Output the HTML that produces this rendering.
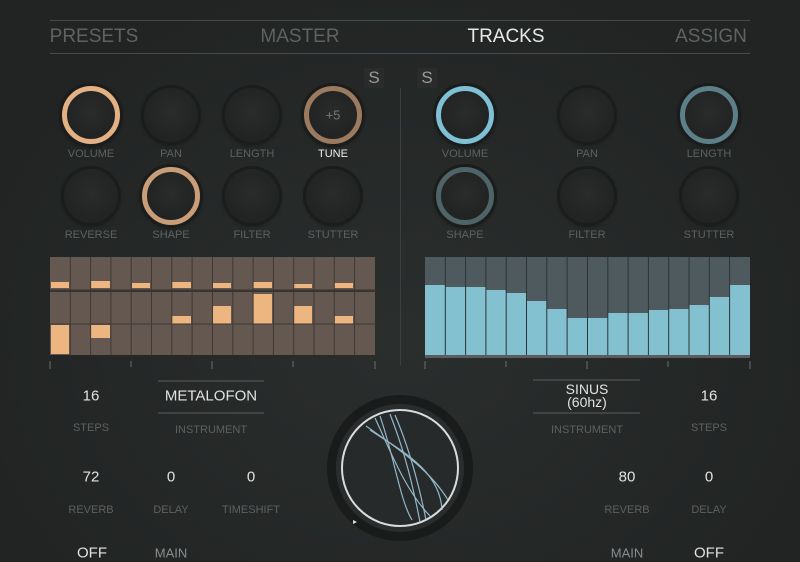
<!DOCTYPE html><html><head><style>
body{margin:0;width:800px;height:560px;overflow:hidden;background:radial-gradient(ellipse at 50% 60%,#2a2e2d,#212423 80%);font-family:"Liberation Sans",sans-serif;position:relative}
.a{position:absolute}
.t{position:absolute;transform:translate(-50%,-50%);white-space:nowrap}
.tab{font-size:19px;color:#5e6262;top:37px}
.lbl{font-size:11px;color:#5d6161}
.val{font-size:15px;color:#e2e2e2}
.k{position:absolute;width:54px;height:54px;border-radius:50%;transform:translate(-50%,-50%);background:radial-gradient(circle at 50% 45%,#2a2c2c,#1e2020);box-shadow:0 0 0 3px #1b1c1c,0 2px 5px #111}
.r{width:48px;height:48px;border-width:5px;border-style:solid}
.hl{position:absolute;height:1px;background:#474a4a}
</style></head><body>
<div class="hl" style="left:50px;width:700px;top:20px"></div>
<div class="hl" style="left:50px;width:700px;top:53px"></div>
<div class="t tab" style="left:94px">PRESETS</div>
<div class="t tab" style="left:300px">MASTER</div>
<div class="t tab" style="left:506px;color:#e8e8e8">TRACKS</div>
<div class="t tab" style="left:711px">ASSIGN</div>
<div class="a" style="left:364px;top:68px;width:20px;height:20px;background:#2a2c2c;color:#9a9c9c;font-size:17px;text-align:center;line-height:20px">S</div>
<div class="a" style="left:417px;top:68px;width:20px;height:20px;background:#2a2c2c;color:#9a9c9c;font-size:17px;text-align:center;line-height:20px">S</div>
<div class="a" style="left:400px;top:88px;width:1px;height:278px;background:#3c3f3f"></div>

<div class="k r" style="left:91px;top:115px;border-color:#e4b184"></div>
<div class="k" style="left:171px;top:115px"></div>
<div class="k" style="left:252px;top:115px"></div>
<div class="k r" style="left:333px;top:115px;border-color:#9c7a5e"></div>
<div class="t" style="left:333px;top:115px;color:#777;font-size:13px">+5</div>
<div class="k" style="left:91px;top:196px"></div>
<div class="k r" style="left:171px;top:196px;border-color:#c99d77"></div>
<div class="k" style="left:252px;top:196px"></div>
<div class="k" style="left:333px;top:196px"></div>
<div class="t lbl" style="left:91px;top:154px">VOLUME</div>
<div class="t lbl" style="left:171px;top:154px">PAN</div>
<div class="t lbl" style="left:252px;top:154px">LENGTH</div>
<div class="t lbl" style="left:333px;top:154px;color:#eee">TUNE</div>
<div class="t lbl" style="left:91px;top:235px">REVERSE</div>
<div class="t lbl" style="left:171px;top:235px">SHAPE</div>
<div class="t lbl" style="left:252px;top:235px">FILTER</div>
<div class="t lbl" style="left:333px;top:235px">STUTTER</div>

<div class="k r" style="left:465px;top:115px;border-color:#7fc0d4"></div>
<div class="k" style="left:587px;top:115px"></div>
<div class="k r" style="left:709px;top:115px;border-color:#5d7f88"></div>
<div class="k r" style="left:465px;top:196px;border-color:#4f6468"></div>
<div class="k" style="left:587px;top:196px"></div>
<div class="k" style="left:709px;top:196px"></div>
<div class="t lbl" style="left:465px;top:154px">VOLUME</div>
<div class="t lbl" style="left:587px;top:154px">PAN</div>
<div class="t lbl" style="left:709px;top:154px">LENGTH</div>
<div class="t lbl" style="left:465px;top:235px">SHAPE</div>
<div class="t lbl" style="left:587px;top:235px">FILTER</div>
<div class="t lbl" style="left:709px;top:235px">STUTTER</div>

<svg class="a" style="left:0;top:0" width="800" height="560">
<rect x="50" y="257" width="325" height="98" fill="#645850"/>
<g fill="#edb57f">
<rect x="51" y="282" width="18" height="6"/><rect x="91" y="281" width="19" height="7"/><rect x="132" y="283" width="18" height="5"/><rect x="172" y="282" width="19" height="6"/><rect x="213" y="283" width="18" height="5"/><rect x="253" y="282" width="19" height="6"/><rect x="294" y="284" width="18" height="4"/><rect x="334" y="283" width="19" height="5"/>
<rect x="172" y="316" width="19" height="8"/><rect x="213" y="306" width="18" height="18"/><rect x="253" y="294" width="19" height="30"/><rect x="294" y="306" width="18" height="18"/><rect x="334" y="316" width="19" height="8"/>
<rect x="51" y="325" width="18" height="29"/><rect x="91" y="325" width="19" height="13"/>
</g>
<g stroke="#3f3935" stroke-width="1">
<line x1="70.3" y1="257" x2="70.3" y2="355"/><line x1="90.6" y1="257" x2="90.6" y2="355"/><line x1="110.9" y1="257" x2="110.9" y2="355"/><line x1="131.2" y1="257" x2="131.2" y2="355"/><line x1="151.5" y1="257" x2="151.5" y2="355"/><line x1="171.8" y1="257" x2="171.8" y2="355"/><line x1="192.1" y1="257" x2="192.1" y2="355"/><line x1="212.5" y1="257" x2="212.5" y2="355"/><line x1="232.8" y1="257" x2="232.8" y2="355"/><line x1="253.1" y1="257" x2="253.1" y2="355"/><line x1="273.4" y1="257" x2="273.4" y2="355"/><line x1="293.7" y1="257" x2="293.7" y2="355"/><line x1="314" y1="257" x2="314" y2="355"/><line x1="334.3" y1="257" x2="334.3" y2="355"/><line x1="354.6" y1="257" x2="354.6" y2="355"/>
<line x1="50" y1="324" x2="375" y2="324"/>
</g>
<rect x="50" y="289.5" width="325" height="2.5" fill="#3a3533"/>
<rect x="425" y="257" width="325" height="100" fill="#4e5a5e"/>
<g fill="#84c1d0">
<rect x="425" y="285" width="20.3" height="70"/><rect x="445.3" y="287" width="20.3" height="68"/><rect x="465.6" y="287" width="20.3" height="68"/><rect x="485.9" y="290" width="20.3" height="65"/><rect x="506.2" y="293" width="20.3" height="62"/><rect x="526.5" y="301" width="20.3" height="54"/><rect x="546.8" y="309" width="20.3" height="46"/><rect x="567.1" y="318" width="20.3" height="37"/><rect x="587.5" y="318" width="20.3" height="37"/><rect x="607.8" y="313" width="20.3" height="42"/><rect x="628.1" y="313" width="20.3" height="42"/><rect x="648.4" y="310" width="20.3" height="45"/><rect x="668.7" y="309" width="20.3" height="46"/><rect x="689" y="305" width="20.3" height="50"/><rect x="709.3" y="297" width="20.3" height="58"/><rect x="729.6" y="285" width="20.4" height="70"/>
</g>
<g stroke="#2b3538" stroke-width="1">
<line x1="445.3" y1="257" x2="445.3" y2="355"/><line x1="465.6" y1="257" x2="465.6" y2="355"/><line x1="485.9" y1="257" x2="485.9" y2="355"/><line x1="506.2" y1="257" x2="506.2" y2="355"/><line x1="526.5" y1="257" x2="526.5" y2="355"/><line x1="546.8" y1="257" x2="546.8" y2="355"/><line x1="567.1" y1="257" x2="567.1" y2="355"/><line x1="587.5" y1="257" x2="587.5" y2="355"/><line x1="607.8" y1="257" x2="607.8" y2="355"/><line x1="628.1" y1="257" x2="628.1" y2="355"/><line x1="648.4" y1="257" x2="648.4" y2="355"/><line x1="668.7" y1="257" x2="668.7" y2="355"/><line x1="689" y1="257" x2="689" y2="355"/><line x1="709.3" y1="257" x2="709.3" y2="355"/><line x1="729.6" y1="257" x2="729.6" y2="355"/>
</g>
<rect x="425" y="355" width="325" height="3" fill="#5b5c60"/>
<g stroke="#6a6d6d" stroke-width="1">
<line x1="50" y1="361" x2="50" y2="369"/><line x1="375" y1="361" x2="375" y2="369"/><line x1="212" y1="361" x2="212" y2="369"/><line x1="131" y1="361" x2="131" y2="367"/><line x1="293" y1="361" x2="293" y2="367"/>
<line x1="425" y1="361" x2="425" y2="369"/><line x1="750" y1="361" x2="750" y2="369"/><line x1="587" y1="361" x2="587" y2="369"/><line x1="506" y1="361" x2="506" y2="367"/><line x1="668" y1="361" x2="668" y2="367"/>
</g>
<circle cx="400" cy="468" r="73" fill="#1a1c1c"/>
<circle cx="400" cy="468" r="64" fill="#2a2d2d"/>
<circle cx="400" cy="468" r="58" fill="#272a2b" stroke="#d9dcdc" stroke-width="2"/>
<g fill="none" stroke="#9fc7d8" stroke-width="1.2" opacity="0.9">
<path d="M366 426 C400 450 430 470 448 500"/><path d="M375 418 C390 450 405 490 430 516"/><path d="M380 416 C395 460 400 500 412 520"/><path d="M390 414 C400 440 410 470 420 522"/><path d="M370 430 C400 450 440 470 442 510"/><path d="M395 415 C410 450 420 490 426 520"/>
</g>
<path d="M353 520 l4 2 -4 2z" fill="#ddd"/>
<line x1="158" y1="381" x2="264" y2="381" stroke="#5a5d5d"/><line x1="158" y1="413" x2="264" y2="413" stroke="#5a5d5d"/>
<line x1="533" y1="380" x2="640" y2="380" stroke="#5a5d5d"/><line x1="533" y1="413" x2="640" y2="413" stroke="#5a5d5d"/>
</svg>

<div class="t val" style="left:91px;top:396px">16</div>
<div class="t lbl" style="left:91px;top:428px">STEPS</div>
<div class="t val" style="left:211px;top:396px">METALOFON</div>
<div class="t lbl" style="left:211px;top:430px">INSTRUMENT</div>
<div class="t val" style="left:91px;top:477px">72</div>
<div class="t val" style="left:171px;top:477px">0</div>
<div class="t val" style="left:251px;top:477px">0</div>
<div class="t lbl" style="left:91px;top:510px">REVERB</div>
<div class="t lbl" style="left:171px;top:510px">DELAY</div>
<div class="t lbl" style="left:251px;top:510px">TIMESHIFT</div>
<div class="t val" style="left:92px;top:553px">OFF</div>
<div class="t val" style="left:171px;top:553px;color:#8a8d8d;font-size:13px">MAIN</div>

<div class="t val" style="left:587px;top:396px;text-align:center;line-height:13px;font-size:14px">SINUS<br>(60hz)</div>
<div class="t lbl" style="left:587px;top:430px">INSTRUMENT</div>
<div class="t val" style="left:709px;top:396px">16</div>
<div class="t lbl" style="left:709px;top:428px">STEPS</div>
<div class="t val" style="left:627px;top:477px">80</div>
<div class="t val" style="left:709px;top:477px">0</div>
<div class="t lbl" style="left:627px;top:510px">REVERB</div>
<div class="t lbl" style="left:709px;top:510px">DELAY</div>
<div class="t val" style="left:627px;top:553px;color:#8a8d8d;font-size:13px">MAIN</div>
<div class="t val" style="left:709px;top:553px">OFF</div>
</body></html>
